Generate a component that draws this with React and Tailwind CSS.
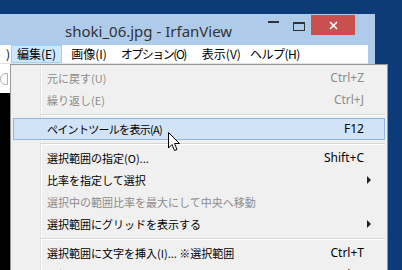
import React from 'react';

const jp = { fontFamily: '"Noto Sans CJK JP", "Noto Sans", sans-serif' };

const MenuRow = ({ label, shortcut, disabled, active, submenu, narrow }) => (
    <div
        className={
            'mx-[2px] h-[22px] flex items-center pl-[33px] pr-[20px] border ' +
            (active ? 'bg-[#d1e3f6] border-[#8fb8e2]' : 'border-transparent') +
            (disabled ? ' text-[#8c8c8c]' : ' text-black')
        }
    >
        <span className={'flex-1 whitespace-nowrap text-[11px]' + (narrow ? ' tracking-[-0.7px]' : '')}>{label}</span>
        {shortcut && <span className="text-[12px] whitespace-nowrap" style={{ fontFamily: '"Noto Sans", sans-serif' }}>{shortcut}</span>}
        {submenu && (
            <svg width="5" height="8" viewBox="0 0 5 8" className="mr-[-8px]">
                <path d="M0 0 L4 4 L0 8 Z" fill="#222" />
            </svg>
        )}
    </div>
);

const Separator = () => (
    <div className="h-[7px] flex items-center pl-[30px] pr-[2px]">
        <div className="flex-1 border-t border-[#d7d7d7] border-b border-b-white" />
    </div>
);

export default function App() {
    return (
        <div className="relative w-[402px] h-[270px] overflow-hidden bg-[#0d3b77]" style={jp}>
            {/* window */}
            <div className="mt-[14px] w-[375px] h-[256px] bg-[#aecbea] flex flex-col">
                <div className="h-[31px] flex items-start">
                    <div className="pl-[65px] pt-[6px] text-[15px] text-[#333] w-[268px]" style={{ fontFamily: '"Noto Sans", sans-serif' }}>
                        shoki_06.jpg - IrfanView
                    </div>
                    <div className="mt-[7px] w-[11px] h-[2px] bg-[#333]" />
                    <div className="mt-[8px] ml-[14px] w-[12px] h-[9px] border border-[#333] border-t-2" />
                    <div className="ml-[6px] mt-[1px] w-[44px] h-[20px] bg-[#c9504f] flex items-center justify-center">
                        <svg width="9" height="9" viewBox="0 0 9 9">
                            <path d="M1 1 L8 8 M8 1 L1 8" stroke="#fff" strokeWidth="1.6" />
                        </svg>
                    </div>
                </div>
                <div className="mr-[7px] flex-1 flex flex-col bg-white">
                    <div className="h-[19px] flex items-center text-[12px] text-black border-b border-[#e3e3e3]">
                        <span className="w-[10px] overflow-hidden flex justify-end">)</span>
                        <span className="ml-[1px] px-[5px] h-[18px] flex items-center bg-[#cce8ff] border border-[#99d1ff]">編集(E)</span>
                        <span className="ml-[9px]">画像(I)</span>
                        <span className="ml-[14px] tracking-[-1.5px]">オプション(O)</span>
                        <span className="ml-[16px]">表示(V)</span>
                        <span className="ml-[9px] tracking-[-0.5px]">ヘルプ(H)</span>
                    </div>
                    <div className="h-[29px] w-[10px] flex items-center">
                        <div className="w-[8px] h-[12px] border border-[#b0b0b0] rounded-l-full" />
                    </div>
                    <div className="flex-1 w-[10px] bg-black" />
                </div>
            </div>

            {/* dropdown menu */}
            <div className="absolute left-[10px] top-[64px] w-[378px] h-[220px] bg-[#f0f0f0] border border-[#979797] pt-[2px]">
                <div className="absolute left-[29px] top-0 bottom-0 w-[2px] border-l border-[#e2e2e2] border-r border-r-white" />
                <div className="relative">
                    <MenuRow label="元に戻す(U)" shortcut="Ctrl+Z" disabled />
                    <MenuRow label="繰り返し(E)" shortcut="Ctrl+J" disabled />
                    <Separator />
                    <MenuRow label="ペイントツールを表示(A)" shortcut="F12" active narrow />
                    <Separator />
                    <MenuRow label="選択範囲の指定(O)..." shortcut="Shift+C" />
                    <MenuRow label="比率を指定して選択" submenu />
                    <MenuRow label="選択中の範囲比率を最大にして中央へ移動" disabled />
                    <MenuRow label="選択範囲にグリッドを表示する" submenu />
                    <Separator />
                    <MenuRow label="選択範囲に文字を挿入(I)... ※選択範囲" shortcut="Ctrl+T" />
                    <MenuRow label="選択範囲で切り抜き(C)" shortcut="Ctrl+Y" />
                </div>
            </div>

            {/* mouse cursor */}
            <svg className="absolute left-[168px] top-[132px]" width="14" height="21" viewBox="0 0 14 21">
                <path d="M0.5 0.5 L0.5 16 L4 12.5 L6.5 18.5 L9 17.5 L6.5 11.5 L11.5 11.5 Z" fill="#fff" stroke="#000" strokeWidth="1" strokeLinejoin="round" />
            </svg>
        </div>
    );
}
